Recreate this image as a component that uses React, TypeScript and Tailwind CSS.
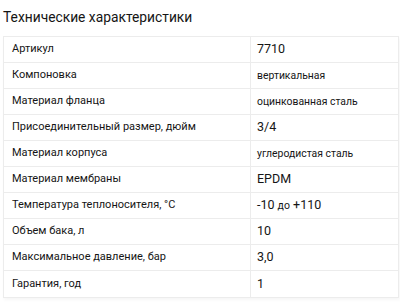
import React from "react";

const rows: [string, React.ReactNode][] = [
  ["Артикул", <span className="text-[12.5px]">7710</span>],
  ["Компоновка", "вертикальная"],
  ["Материал фланца", "оцинкованная сталь"],
  ["Присоединительный размер, дюйм", <span className="text-[12.5px]">3/4</span>],
  ["Материал корпуса", "углеродистая сталь"],
  ["Материал мембраны", <span className="text-[12.5px]">EPDM</span>],
  ["Температура теплоносителя, °С", <span className="text-[12.5px]">-10 <span className="text-[10.5px]">до</span> +110</span>],
  ["Объем бака, л", <span className="text-[12.5px]">10</span>],
  ["Максимальное давление, бар", <span className="text-[12.5px]">3,0</span>],
  ["Гарантия, год", <span className="text-[12.5px]">1</span>],
];

export default function App() {
  return (
    <div
      className="w-[400px] h-[305px] bg-white text-[#151515] overflow-hidden"
      style={{ fontFamily: 'Roboto, "Noto Sans", sans-serif' }}
    >
      <div className="pl-[3px] pt-[8px] h-[36px] text-[13.8px] leading-[18px]">
        Технические характеристики
      </div>
      <div className="ml-[3px] w-[396px] border border-[#ececec] shadow-[1px_2px_3px_rgba(0,0,0,0.04)]">
        {rows.map(([k, v], i) => (
          <div
            key={i}
            className={`flex h-[26px] ${i < rows.length - 1 ? "border-b border-[#ececec]" : ""}`}
          >
            <div className="w-[247px] shrink-0 flex items-center pl-[8px] text-[11px] border-r border-[#ececec]">
              {k}
            </div>
            <div className="flex-1 flex items-center pl-[6px] text-[10.4px]">{v}</div>
          </div>
        ))}
      </div>
    </div>
  );
}
